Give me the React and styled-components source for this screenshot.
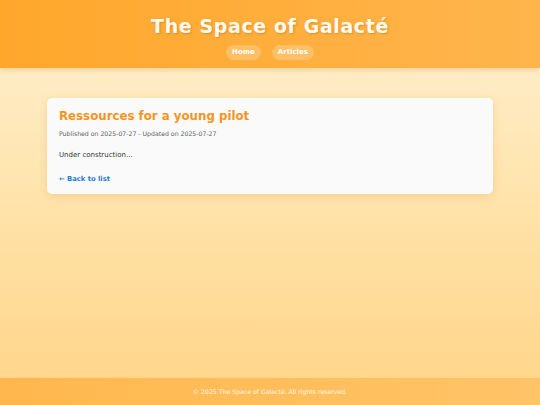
import React from 'react';
import styled, { createGlobalStyle } from 'styled-components';

const GlobalStyle = createGlobalStyle`
  html, body { margin: 0; padding: 0; }
  body {
    font-family: "DejaVu Sans", "Liberation Sans", sans-serif;
    background: linear-gradient(180deg, #fff1d3 0%, #ffe3aa 50%, #ffd487 100%);
    min-height: 100vh;
  }
  #root { min-height: 100vh; display: flex; flex-direction: column; }
`;

const Header = styled.header`
  background: linear-gradient(90deg, #ffa72b 0%, #ffb54d 100%);
  box-shadow: 0 2px 6px rgba(200, 120, 20, 0.25);
  padding: 14px 0 0;
  text-align: center;
  height: 54px;
`;

const Title = styled.h1`
  margin: 0;
  color: #fffaf0;
  font-size: 19px;
  line-height: 24px;
  font-weight: bold;
  letter-spacing: 0.6px;
  text-shadow: 1px 1px 2px rgba(160, 90, 0, 0.35);
`;

const Nav = styled.nav`
  display: flex;
  justify-content: center;
  gap: 11px;
  margin-top: 7px;
`;

const NavLink = styled.a`
  color: #fff;
  font-size: 7px;
  line-height: 8px;
  font-weight: bold;
  text-decoration: none;
  padding: 3px 6px 4px;
  border-radius: 10px;
  background: rgba(255, 255, 255, 0.22);
`;

const Main = styled.main`
  flex: 1;
  padding: 30px 47px;
`;

const Card = styled.article`
  background: #fafafa;
  border-radius: 5px;
  box-shadow: 0 2px 8px rgba(200, 130, 30, 0.2);
  padding: 11px 12px 9px;
`;

const CardTitle = styled.h2`
  margin: 0;
  color: #f7941d;
  font-size: 11.8px;
  line-height: 14px;
  font-weight: bold;
`;

const Meta = styled.p`
  margin: 7px 0 0;
  color: #5e5e5e;
  font-size: 6.2px;
  line-height: 8px;
`;

const Body = styled.p`
  margin: 13px 0 0;
  color: #333;
  font-size: 7px;
  line-height: 9px;
`;

const BackLink = styled.a`
  display: inline-block;
  margin-top: 15px;
  color: #1e7ad2;
  font-size: 6.8px;
  line-height: 9px;
  font-weight: bold;
  text-decoration: none;
`;

const Footer = styled.footer`
  background: linear-gradient(90deg, #ffb74d 0%, #ffc468 100%);
  color: #fff8ea;
  font-size: 6.2px;
  line-height: 8px;
  text-align: center;
  padding: 10px 0 9px;
`;

export default function App() {
  return (
    <>
      <GlobalStyle />
      <Header>
        <Title>The Space of Galacté</Title>
        <Nav>
          <NavLink href="#">Home</NavLink>
          <NavLink href="#">Articles</NavLink>
        </Nav>
      </Header>
      <Main>
        <Card>
          <CardTitle>Ressources for a young pilot</CardTitle>
          <Meta>Published on 2025-07-27 - Updated on 2025-07-27</Meta>
          <Body>Under construction...</Body>
          <BackLink href="#">← Back to list</BackLink>
        </Card>
      </Main>
      <Footer>© 2025 The Space of Galacté. All rights reserved.</Footer>
    </>
  );
}
